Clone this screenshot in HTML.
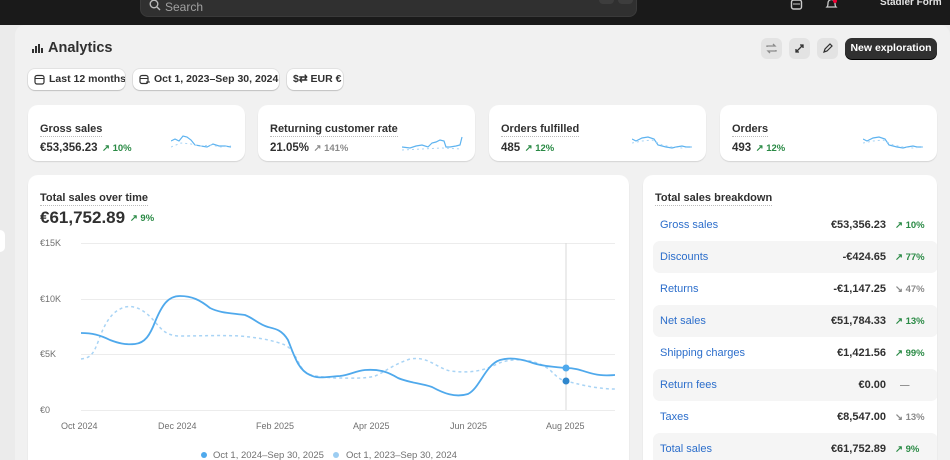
<!DOCTYPE html>
<html><head><meta charset="utf-8"><style>
*{box-sizing:border-box;margin:0;padding:0}
html,body{width:950px;height:460px;overflow:hidden}
body{background:#ebebeb;font-family:"Liberation Sans",sans-serif;position:relative;color:#303030}
.top{position:absolute;left:0;top:0;width:950px;height:25px;background:#1a1a1a}
.search{position:absolute;left:140px;top:-8px;width:497px;height:25px;background:#303030;border-radius:8px;border:1px solid #3a3a3a}
.search span{position:absolute;left:24px;top:7px;color:#a0a0a0;font-size:12px}
.kbd{position:absolute;top:-4px;width:15px;height:15px;background:#3d3d3d;border-radius:4px;color:#aaa;font-size:10px;text-align:center;line-height:18px}
.main{position:absolute;left:15px;top:25px;width:935px;height:435px;background:#f1f1f1;border-radius:10px 10px 0 0}
.abs{position:absolute;white-space:nowrap}
.pill{position:absolute;top:69px;height:21px;background:#fff;border-radius:7px;box-shadow:0 1px 1px rgba(0,0,0,.15),0 0 0 1px rgba(0,0,0,.06);font-size:10.5px;font-weight:bold;color:#303030;line-height:21px;padding-left:21px;white-space:nowrap;overflow:hidden}
.card{position:absolute;background:#fff;border-radius:10px;box-shadow:0 1px 1px rgba(0,0,0,.12);overflow:hidden}
.lbl{font-size:11px;font-weight:bold;color:#303030;border-bottom:1px dotted #bbb;display:inline-block;padding-bottom:1px}
.val{font-size:11.5px;font-weight:bold;color:#303030}
.g{color:#2a8a45;font-size:9.5px;font-weight:bold}
.gr{color:#8a8a8a;font-size:9.5px;font-weight:bold}
.ib{position:absolute;top:38px;width:21px;height:21px;background:#e3e3e3;border-radius:6px}
.row{position:absolute;left:10px;width:285px;height:32px;border-radius:7px;font-size:11px;white-space:nowrap}
.row.s{background:#f5f5f5}
.row .n{position:absolute;left:7px;top:10px;color:#2c6ecb}
.row .v{position:absolute;right:52px;top:10px;font-weight:bold;color:#303030}
.row .p{position:absolute;left:242px;top:11px;font-size:9.5px;font-weight:bold}
.ax{position:absolute;font-size:9px;color:#707070;white-space:nowrap}
</style></head><body>
<div class="top">
 <div class="search">
  <svg class="abs" style="left:8px;top:6px" width="12" height="12" viewBox="0 0 12 12"><circle cx="5" cy="5" r="3.8" fill="none" stroke="#bbb" stroke-width="1.4"/><path d="M8 8l3 3" stroke="#bbb" stroke-width="1.4"/></svg>
  <span>Search</span>
  <div class="kbd" style="left:458px">⌘</div><div class="kbd" style="left:477px">K</div>
 </div>
 <svg class="abs" style="left:790px;top:0" width="13" height="11" viewBox="0 0 13 11"><rect x="1.5" y="0" width="10" height="9" rx="2" fill="none" stroke="#ccc" stroke-width="1.4"/><path d="M3 4h7" stroke="#ccc"/></svg>
 <svg class="abs" style="left:825px;top:0" width="13" height="11" viewBox="0 0 13 11"><path d="M2 7c1-1 1-2 1-4a3.5 3.5 0 017 0c0 2 0 3 1 4z" fill="none" stroke="#ccc" stroke-width="1.3"/><circle cx="10" cy="1" r="2" fill="#e03"/></svg>
 <div class="abs" style="left:880px;top:-3px;color:#e3e3e3;font-size:10px;font-weight:bold">Stadler Form</div>
</div>
<div class="main"></div>
<div class="abs" style="left:0;top:230px;width:5px;height:22px;background:#fff;border-radius:0 5px 5px 0"></div>

<svg class="abs" style="left:32px;top:43px" width="12" height="11" viewBox="0 0 12 11"><path d="M1 10V6M4 10V3M7 10V1M10 10V5" stroke="#303030" stroke-width="2"/></svg>
<div class="abs" style="left:48px;top:40px;font-size:14.5px;font-weight:bold;color:#303030">Analytics</div>

<div class="ib" style="left:761px"><svg width="21" height="21" viewBox="0 0 21 21"><path d="M6 9V8h8l-2-2M15 12v1H7l2 2" fill="none" stroke="#8a8a8a" stroke-width="1.3"/></svg></div>
<div class="ib" style="left:789px"><svg width="21" height="21" viewBox="0 0 21 21"><path d="M7 14l7-7M11 7h3v3M7 11v3h3" fill="none" stroke="#303030" stroke-width="1.3"/></svg></div>
<div class="ib" style="left:817px"><svg width="21" height="21" viewBox="0 0 21 21"><path d="M7 14l1-3 5-5 2 2-5 5z" fill="none" stroke="#303030" stroke-width="1.2"/></svg></div>
<div class="abs" style="left:845px;top:38px;width:92px;height:21px;background:#303030;border-radius:7px;color:#fff;font-size:10.5px;font-weight:bold;text-align:center;line-height:21px;box-shadow:0 1px 0 #000">New exploration</div>

<div class="pill" style="left:28px;width:97px"><svg class="abs" style="left:6px;top:5px" width="11" height="11" viewBox="0 0 11 11"><rect x="1" y="1.5" width="9" height="8.5" rx="2" fill="none" stroke="#303030" stroke-width="1.2"/><path d="M1 4.5h9" stroke="#303030"/></svg>Last 12 months</div>
<div class="pill" style="left:133px;width:146px"><svg class="abs" style="left:6px;top:5px" width="11" height="11" viewBox="0 0 11 11"><rect x="1" y="1.5" width="8" height="8" rx="2" fill="none" stroke="#303030" stroke-width="1.2"/><path d="M1 4.5h8M7 8h4" stroke="#303030"/></svg>Oct 1, 2023–Sep 30, 2024</div>
<div class="pill" style="left:287px;width:56px;padding-left:6px">$⇄ EUR €</div>

<div class="card" style="left:28px;top:105px;width:217px;height:56px"><div class="abs" style="left:12px;top:14px"><span class="lbl">Gross sales</span></div><div class="abs" style="left:12px;top:33px"><span class="val">€53,356.23</span> <span class="g">↗ 10%</span></div>
<svg class="abs" style="left:143px;top:28px" width="62" height="20"><path d="M0 8 4 6 8 8 12 3 16 4 20 7 24 12 30 13 36 14 42 11 48 13 54 13 60 14" fill="none" stroke="#5db3f0" stroke-width="1.2"/><path d="M0 14 10 10 20 11 30 13 40 12 50 14 60 13" fill="none" stroke="#a9d4f5" stroke-dasharray="2 3"/></svg></div>
<div class="card" style="left:258px;top:105px;width:217px;height:56px"><div class="abs" style="left:12px;top:14px"><span class="lbl">Returning customer rate</span></div><div class="abs" style="left:12px;top:33px"><span class="val">21.05%</span> <span class="gr">↗ 141%</span></div>
<svg class="abs" style="left:144px;top:28px" width="62" height="20"><path d="M0 14 8 15 14 13 20 12 26 14 30 10 34 9 38 7 42 8 44 14 48 14 54 13 58 12 60 4" fill="none" stroke="#5db3f0" stroke-width="1.2"/><path d="M0 17 20 16 40 15 60 16" fill="none" stroke="#a9d4f5" stroke-dasharray="2 3"/></svg></div>
<div class="card" style="left:489px;top:105px;width:217px;height:56px"><div class="abs" style="left:12px;top:14px"><span class="lbl">Orders fulfilled</span></div><div class="abs" style="left:12px;top:33px"><span class="val">485</span> <span class="g">↗ 12%</span></div>
<svg class="abs" style="left:143px;top:28px" width="62" height="20"><path d="M0 6 4 8 10 5 16 4 22 6 26 12 34 14 40 15 44 14 50 13 54 14 60 14" fill="none" stroke="#5db3f0" stroke-width="1.2"/><path d="M0 10 10 8 20 7 30 12 40 14 50 15 60 14" fill="none" stroke="#a9d4f5" stroke-dasharray="2 3"/></svg></div>
<div class="card" style="left:720px;top:105px;width:217px;height:56px"><div class="abs" style="left:12px;top:14px"><span class="lbl">Orders</span></div><div class="abs" style="left:12px;top:33px"><span class="val">493</span> <span class="g">↗ 12%</span></div>
<svg class="abs" style="left:143px;top:28px" width="62" height="20"><path d="M0 6 4 8 10 5 16 4 22 6 26 12 34 14 40 15 44 14 50 13 54 14 60 14" fill="none" stroke="#5db3f0" stroke-width="1.2"/><path d="M0 10 10 8 20 7 30 12 40 14 50 15 60 14" fill="none" stroke="#a9d4f5" stroke-dasharray="2 3"/></svg></div>

<div class="card" style="left:28px;top:175px;width:601px;height:295px">
 <div class="abs" style="left:12px;top:13px"><span class="lbl">Total sales over time</span></div>
 <div class="abs" style="left:12px;top:33px;font-size:17px;font-weight:bold;color:#303030">€61,752.89 <span class="g" style="font-size:9.5px;vertical-align:2px">↗ 9%</span></div>
</div>
<div class="ax" style="left:40px;top:238px">€15K</div>
<div class="ax" style="left:40px;top:294px">€10K</div>
<div class="ax" style="left:40px;top:349px">€5K</div>
<div class="ax" style="left:40px;top:405px">€0</div>
<div class="ax" style="left:61px;top:421px">Oct 2024</div>
<div class="ax" style="left:158px;top:421px">Dec 2024</div>
<div class="ax" style="left:256px;top:421px">Feb 2025</div>
<div class="ax" style="left:353px;top:421px">Apr 2025</div>
<div class="ax" style="left:450px;top:421px">Jun 2025</div>
<div class="ax" style="left:546px;top:421px">Aug 2025</div>
<svg class="abs" style="left:0;top:0" width="640" height="460">
 <g stroke="#ececec" stroke-width="1"><path d="M81 243.5H615M81 299.5H615M81 354.5H615M81 410.5H615"/></g>
 <path d="M566 243V410" stroke="#d8d8d8"/>
 <path d="M81 359C90 358 93 355 98 342C105 322 112 311 125 307C135 305 145 310 155 322C162 330 166 335 178 336C200 336 220 335 240 336C262 338 275 341 285 345C295 350 298 365 305 372C312 377 325 377 335 378C352 378 365 379 375 376C385 372 392 365 410 359C428 356 435 367 450 371C468 373 480 372 495 365C510 357 535 358 550 370C556 376 560 380 566 381C585 386 600 389 615 389" fill="none" stroke="#a9d4f5" stroke-width="1.5" stroke-dasharray="3 3"/>
 <path d="M81 333C92 333 100 335 110 340C118 343 125 345 135 344C145 343 150 335 155 322C162 305 168 296 180 296C192 296 200 300 210 308C220 313 230 313 245 315C255 319 258 324 268 327C276 329 282 330 288 340C294 355 298 370 310 375C318 379 325 377 340 376C350 375 355 371 365 370C380 369 388 372 398 378C410 383 420 383 432 387C443 393 455 398 468 394C480 388 485 365 500 360C510 357 520 359 530 362C540 366 555 367 566 368C580 368 588 374 600 375C608 376 612 375 615 375" fill="none" stroke="#4fa9ec" stroke-width="1.8"/>
 <circle cx="566" cy="368" r="3.5" fill="#4fa9ec"/>
 <circle cx="566" cy="381" r="3.5" fill="#2f86cc"/>
 <circle cx="204" cy="455" r="3" fill="#4fa9ec"/>
 <circle cx="336" cy="455" r="3" fill="#9ccdf2"/>
</svg>
<div class="ax" style="left:213px;top:450px;font-size:9.5px">Oct 1, 2024–Sep 30, 2025</div>
<div class="ax" style="left:346px;top:450px;font-size:9.5px">Oct 1, 2023–Sep 30, 2024</div>

<div class="card" style="left:643px;top:175px;width:294px;height:295px">
 <div class="abs" style="left:12px;top:13px"><span class="lbl">Total sales breakdown</span></div>
 <div class="row" style="top:34px"><span class="n">Gross sales</span><span class="v">€53,356.23</span><span class="p g">↗ 10%</span></div>
 <div class="row s" style="top:66px"><span class="n">Discounts</span><span class="v">-€424.65</span><span class="p g">↗ 77%</span></div>
 <div class="row" style="top:98px"><span class="n">Returns</span><span class="v">-€1,147.25</span><span class="p gr">↘ 47%</span></div>
 <div class="row s" style="top:130px"><span class="n">Net sales</span><span class="v">€51,784.33</span><span class="p g">↗ 13%</span></div>
 <div class="row" style="top:162px"><span class="n">Shipping charges</span><span class="v">€1,421.56</span><span class="p g">↗ 99%</span></div>
 <div class="row s" style="top:194px"><span class="n">Return fees</span><span class="v">€0.00</span><span class="p gr" style="left:247px">—</span></div>
 <div class="row" style="top:226px"><span class="n">Taxes</span><span class="v">€8,547.00</span><span class="p gr">↘ 13%</span></div>
 <div class="row s" style="top:258px"><span class="n">Total sales</span><span class="v">€61,752.89</span><span class="p g">↗ 9%</span></div>
</div>
</body></html>
